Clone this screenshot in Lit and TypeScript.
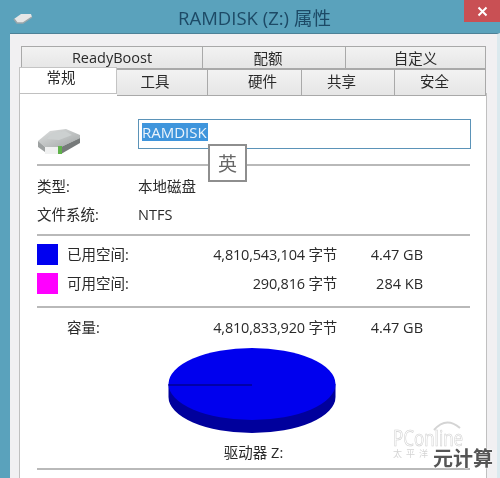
import { LitElement, html, css, svg } from 'lit';
import { customElement } from 'lit/decorators.js';

// the labels are not centred in the reference, pad pushes them sideways
const topTabs = [
  { label: 'ReadyBoost', pad: '0' },
  { label: '配额', pad: '0 12px 0 0' },
  { label: '自定义', pad: '0' },
];
const bottomTabs = [
  { label: '常规', pad: '0 14px 8px 0' },
  { label: '工具', pad: '0 14px 4px 0' },
  { label: '硬件', pad: '0 0 4px 16px' },
  { label: '共享', pad: '0 13px 4px 0' },
  { label: '安全', pad: '0 11px 4px 0' },
];

const spaceRows = [
  { swatch: '#0000f0', label: '已用空间:', bytes: '4,810,543,104 字节', size: '4.47 GB' },
  { swatch: '#ff00ff', label: '可用空间:', bytes: '290,816 字节', size: '284 KB' },
];

@customElement('app-root')
export class AppRoot extends LitElement {
  static styles = css`
    :host {
      display: block;
      position: relative;
      width: 500px;
      height: 478px;
      overflow: hidden;
      background: #5aa2bc;
      color: #2a2a2a;
      font-family: 'Open Sans', 'Noto Sans CJK SC', sans-serif;
      font-size: 14.5px;
      filter: blur(0.4px);
    }

    .titlebar {
      display: flex;
      align-items: center;
      justify-content: center;
      height: 33px;
      padding-left: 9px;
      box-sizing: border-box;
      font-size: 18.5px;
      color: #1d4a66;
    }

    .close {
      position: absolute;
      top: 0;
      right: 0;
      width: 36px;
      height: 22px;
      display: flex;
      align-items: center;
      justify-content: center;
      background: #c95054;
    }

    .app-icon {
      position: absolute;
      left: 13px;
      top: 13px;
    }

    .window {
      margin-left: 10px;
      height: 445px;
      padding: 12px 10px 0 9px;
      background: #f1f0f2;
      border-top: 1px solid #4d8197;
      border-right: 3px solid #dbe9ee;
      box-sizing: border-box;
    }

    .tabs {
      display: grid;
      margin-left: 2px;
      height: 23px;
    }
    .tabs.top {
      grid-template-columns: 182px 143px 140px;
    }
    .tabs.bottom {
      grid-template-columns: 98px 91px 94px 93px 91px;
      margin-left: 0;
      height: 24px;
    }

    .tab {
      display: flex;
      align-items: center;
      justify-content: center;
      background: linear-gradient(#f2f2f2, #e6e6e6);
      border: 1px solid #a9a9a9;
      border-left-width: 0;
      box-sizing: border-box;
    }
    .tab:first-child {
      border-left-width: 1px;
    }
    .tab.active {
      position: relative;
      z-index: 1;
      height: 26px;
      margin-top: -2px;
      background: #fff;
      border-color: #c4c4c4;
      border-bottom: 0;
    }

    .panel {
      height: 400px;
      padding: 25px 16px 0 17px;
      background: #fff;
      border: 1px solid #c0c0c0;
      box-sizing: border-box;
    }

    .head {
      display: grid;
      grid-template-columns: 101px 1fr;
      height: 45px;
    }
    .drive {
      display: block;
      margin-top: 9px;
    }

    .name {
      position: relative;
      height: 30px;
      margin-right: -1px;
      padding: 3px;
      border: 1px solid #5b93b8;
      box-sizing: border-box;
      font-size: 15px;
    }
    .name span {
      display: block;
      width: 66px;
      height: 18px;
      line-height: 18px;
      background: #3f95dc;
      color: #eaf3fb;
    }

    .ime {
      position: absolute;
      left: 69px;
      top: 24px;
      z-index: 2;
      width: 39px;
      height: 38px;
      display: flex;
      align-items: center;
      justify-content: center;
      background: #fff;
      border: 2px solid #8e8e8e;
      box-sizing: border-box;
      font-size: 19px;
      color: #666;
    }

    hr {
      height: 2px;
      margin: 0;
      border: 0;
      background: #b9b9b9;
    }

    .info {
      display: grid;
      grid-template-columns: 101px 1fr;
      align-content: start;
      row-gap: 9px;
      height: 68px;
      padding-top: 11px;
      box-sizing: border-box;
      line-height: 19px;
    }

    .space {
      display: grid;
      grid-template-columns: 30px 1fr 140px 86px;
      align-items: center;
      align-content: start;
      row-gap: 8px;
      padding-right: 47px;
      box-sizing: border-box;
      line-height: 18px;
    }
    .space.used {
      height: 70px;
      padding-top: 8px;
    }
    .space.total {
      height: 40px;
      align-content: center;
    }
    .swatch {
      width: 21px;
      height: 21px;
    }
    .num {
      text-align: right;
      white-space: nowrap;
    }
    .bytes {
      letter-spacing: -0.2px;
    }

    .pie {
      display: block;
      margin-left: 131px;
    }

    .caption {
      height: 25px;
      margin-top: 10px;
      line-height: 20px;
      text-align: center;
    }

    .mark {
      position: absolute;
      left: 393px;
      top: 418px;
      width: 103px;
      height: 50px;
      pointer-events: none;
    }
    .mark .pc {
      position: absolute;
      left: 0;
      top: 12px;
      font-size: 17px;
      line-height: 16px;
      color: #fff;
      -webkit-text-stroke: 0.5px #cfcfcf;
      transform: scaleY(1.25);
    }
    .mark .cn {
      position: absolute;
      left: 0;
      top: 30px;
      font-size: 9px;
      line-height: 12px;
      letter-spacing: 4px;
      color: #d4d4d4;
    }
    .mark .brand {
      position: absolute;
      left: 40px;
      top: 32px;
      font-size: 20px;
      font-weight: 700;
      line-height: 18px;
      color: #555;
      text-shadow: 0 0 2px #fff, 0 0 2px #fff;
    }
    .mark .arc {
      position: absolute;
      left: 39px;
      top: 0;
    }
  `;

  renderPie() {
    const cx = 84;
    const cy = 36;
    const rx = 83.5;
    const ry = 36;
    const depth = 13;
    return svg`
      <path d="M${cx - rx} ${cy} v${depth} a${rx} ${ry} 0 0 0 ${rx * 2} 0 v${-depth} z" fill="#00009c" />
      <ellipse cx=${cx} cy=${cy} rx=${rx} ry=${ry} fill="#0000ee" />
      <line x1=${cx - rx} y1=${cy + 1} x2=${cx} y2=${cy + 1} stroke="#000090" stroke-width="1.5" />
    `;
  }

  render() {
    return html`
      <div class="titlebar">RAMDISK (Z:) 属性</div>
      <svg class="app-icon" width="20" height="11" viewBox="0 0 20 11">
        <path d="M1 6 L8 1 H18 L19 4 L10 10 H4 Z" fill="#e6e6e6" />
        <path d="M1 6 L4 10 H10 L19 4" fill="none" stroke="#9aa6aa" stroke-width="1.5" />
      </svg>
      <div class="close">
        <svg width="11" height="11" viewBox="0 0 11 11">
          <path d="M1.5 1.5 L9.5 9.5 M9.5 1.5 L1.5 9.5" stroke="#fff" stroke-width="2" />
        </svg>
      </div>

      <div class="window">
        <div class="tabs top">
          ${topTabs.map((t) => html`<div class="tab" style="padding: ${t.pad}">${t.label}</div>`)}
        </div>
        <div class="tabs bottom">
          ${bottomTabs.map(
            (t, i) =>
              html`<div class="tab ${i === 0 ? 'active' : ''}" style="padding: ${t.pad}">${t.label}</div>`
          )}
        </div>

        <div class="panel">
          <div class="head">
            <svg class="drive" width="44" height="27" viewBox="0 0 44 27">
              <defs>
                <linearGradient id="lid" x1="0" y1="0" x2="1" y2="1">
                  <stop offset="0" stop-color="#dfe1e1" />
                  <stop offset="1" stop-color="#a3a7a7" />
                </linearGradient>
              </defs>
              <path d="M1 13 L13 3 L29 1 L43 7 L43 10 L24 19 H8 Z" fill="url(#lid)" />
              <path d="M15 5 L28 3 L35 7 L22 12 L10 11 Z" fill="#ccd0d0" />
              <path d="M1 13 L8 19 V24 L1 19 Z" fill="#9da1a1" />
              <path d="M8 19 H24 V26 H8 Z" fill="#f0f1f1" />
              <path d="M24 19 L43 10 V15 L24 26 Z" fill="#767a7a" />
              <rect x="21" y="18" width="4" height="8" fill="#5fb24a" />
            </svg>
            <div class="name">
              <span>RAMDISK</span>
              <div class="ime">英</div>
            </div>
          </div>
          <hr />
          <div class="info">
            <div>类型:</div><div>本地磁盘</div>
            <div>文件系统:</div><div>NTFS</div>
          </div>
          <hr />
          <div class="space used">
            ${spaceRows.map(
              (r) => html`
                <div class="swatch" style="background: ${r.swatch}"></div>
                <div>${r.label}</div>
                <div class="num bytes">${r.bytes}</div>
                <div class="num">${r.size}</div>
              `
            )}
          </div>
          <hr />
          <div class="space total">
            <div></div>
            <div>容量:</div>
            <div class="num bytes">4,810,833,920 字节</div>
            <div class="num">4.47 GB</div>
          </div>
          <svg class="pie" width="168" height="85" viewBox="0 0 168 85">${this.renderPie()}</svg>
          <div class="caption">驱动器 Z:</div>
          <hr />
        </div>
      </div>

      <div class="mark">
        <svg class="arc" width="30" height="14" viewBox="0 0 30 14">
          <path d="M2 12 Q14 -2 28 10" fill="none" stroke="#d4d4d4" stroke-width="2" />
        </svg>
        <span class="pc">PConline</span>
        <span class="cn">太平洋</span>
        <span class="brand">元计算</span>
      </div>
    `;
  }
}
